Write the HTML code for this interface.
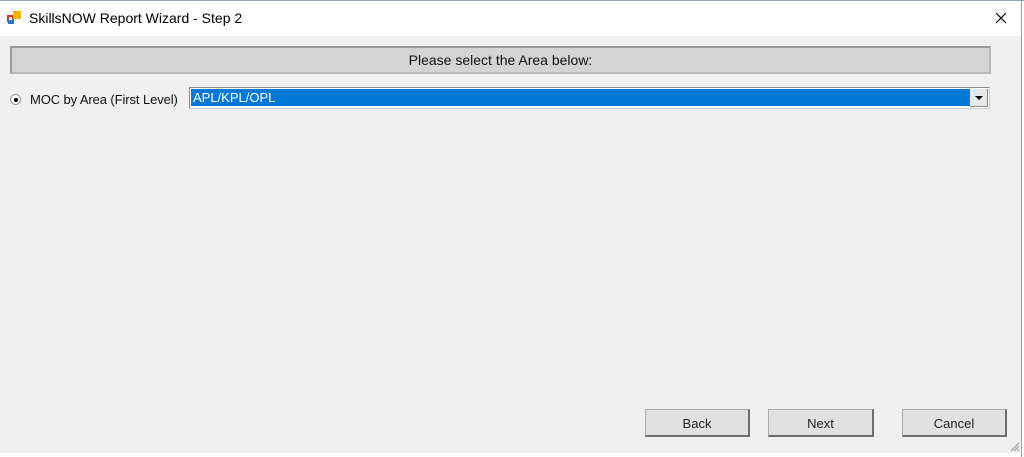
<!DOCTYPE html>
<html><head><style>
body{margin:0;width:1024px;height:457px;overflow:hidden;font-family:"Liberation Sans",sans-serif;background:#fff;position:relative}
.a{position:absolute}
.btn{position:absolute;top:409px;height:28px;background:#e1e1e1;border:1px solid #adadad;border-right:2px solid #6d6d6d;border-bottom:2px solid #6d6d6d;box-sizing:border-box;font-size:13px;color:#222;text-align:center;line-height:27px}
</style></head><body>
<div class="a" style="left:0;top:0;width:1024px;height:1px;background:#8fa4bd"></div>
<div class="a" style="left:1021px;top:0;width:1px;height:457px;background:#a0a0a0"></div>
<svg class="a" style="left:7px;top:10px" width="16" height="16"><rect x="0" y="5" width="7" height="7" fill="#d33"/><rect x="6" y="1" width="8" height="8" fill="#f4b400"/><rect x="1" y="9" width="6" height="5" fill="#3a6fc8"/><rect x="2" y="7" width="3" height="3" fill="#fff"/></svg>
<div class="a" style="left:29px;top:10px;font-size:14px;color:#000">SkillsNOW Report Wizard - Step 2</div>
<svg class="a" style="left:995px;top:12px" width="12" height="12"><path d="M1 1L11 11M11 1L1 11" stroke="#000" stroke-width="1.2"/></svg>
<div class="a" style="left:0;top:36px;width:1021px;height:417px;background:#f0f0f0"></div>
<div class="a" style="left:10px;top:46px;width:981px;height:28px;box-sizing:border-box;background:#d4d4d4;border:2px solid #999;border-right-color:#bbb;border-bottom-color:#bbb;font-size:14px;text-align:center;line-height:24px;color:#111">Please select the Area below:</div>
<div class="a" style="left:10px;top:94px;width:11px;height:11px;border-radius:50%;background:#fff;border:1px solid #999;box-sizing:border-box"></div>
<div class="a" style="left:14px;top:98px;width:4px;height:4px;border-radius:50%;background:#000"></div>
<div class="a" style="left:30px;top:92px;font-size:13px;color:#111;letter-spacing:-0.1px">MOC by Area (First Level)</div>
<div class="a" style="left:189px;top:87px;width:801px;height:22px;box-sizing:border-box;background:#fff;border:1px solid #888;border-right-color:#ccc;border-bottom-color:#ccc"></div>
<div class="a" style="left:191px;top:89px;width:779px;height:17px;background:#0078d7;color:#fff;font-size:13px;line-height:17px;padding-left:2px;box-sizing:border-box">APL/KPL/OPL</div>
<div class="a" style="left:970px;top:89px;width:18px;height:18px;background:#e8e8e8;border-right:1px solid #888;border-bottom:1px solid #888;box-sizing:border-box"></div>
<div class="a" style="left:975px;top:96px;width:0;height:0;border-left:4px solid transparent;border-right:4px solid transparent;border-top:4px solid #000"></div>
<div class="btn" style="left:645px;width:105px">Back</div>
<div class="btn" style="left:768px;width:106px">Next</div>
<div class="btn" style="left:902px;width:105px">Cancel</div>
<svg class="a" style="left:1008px;top:440px" width="12" height="12"><path d="M11 3L3 11M11 6L6 11M11 9L9 11" stroke="#999" stroke-width="1"/></svg>
</body></html>
